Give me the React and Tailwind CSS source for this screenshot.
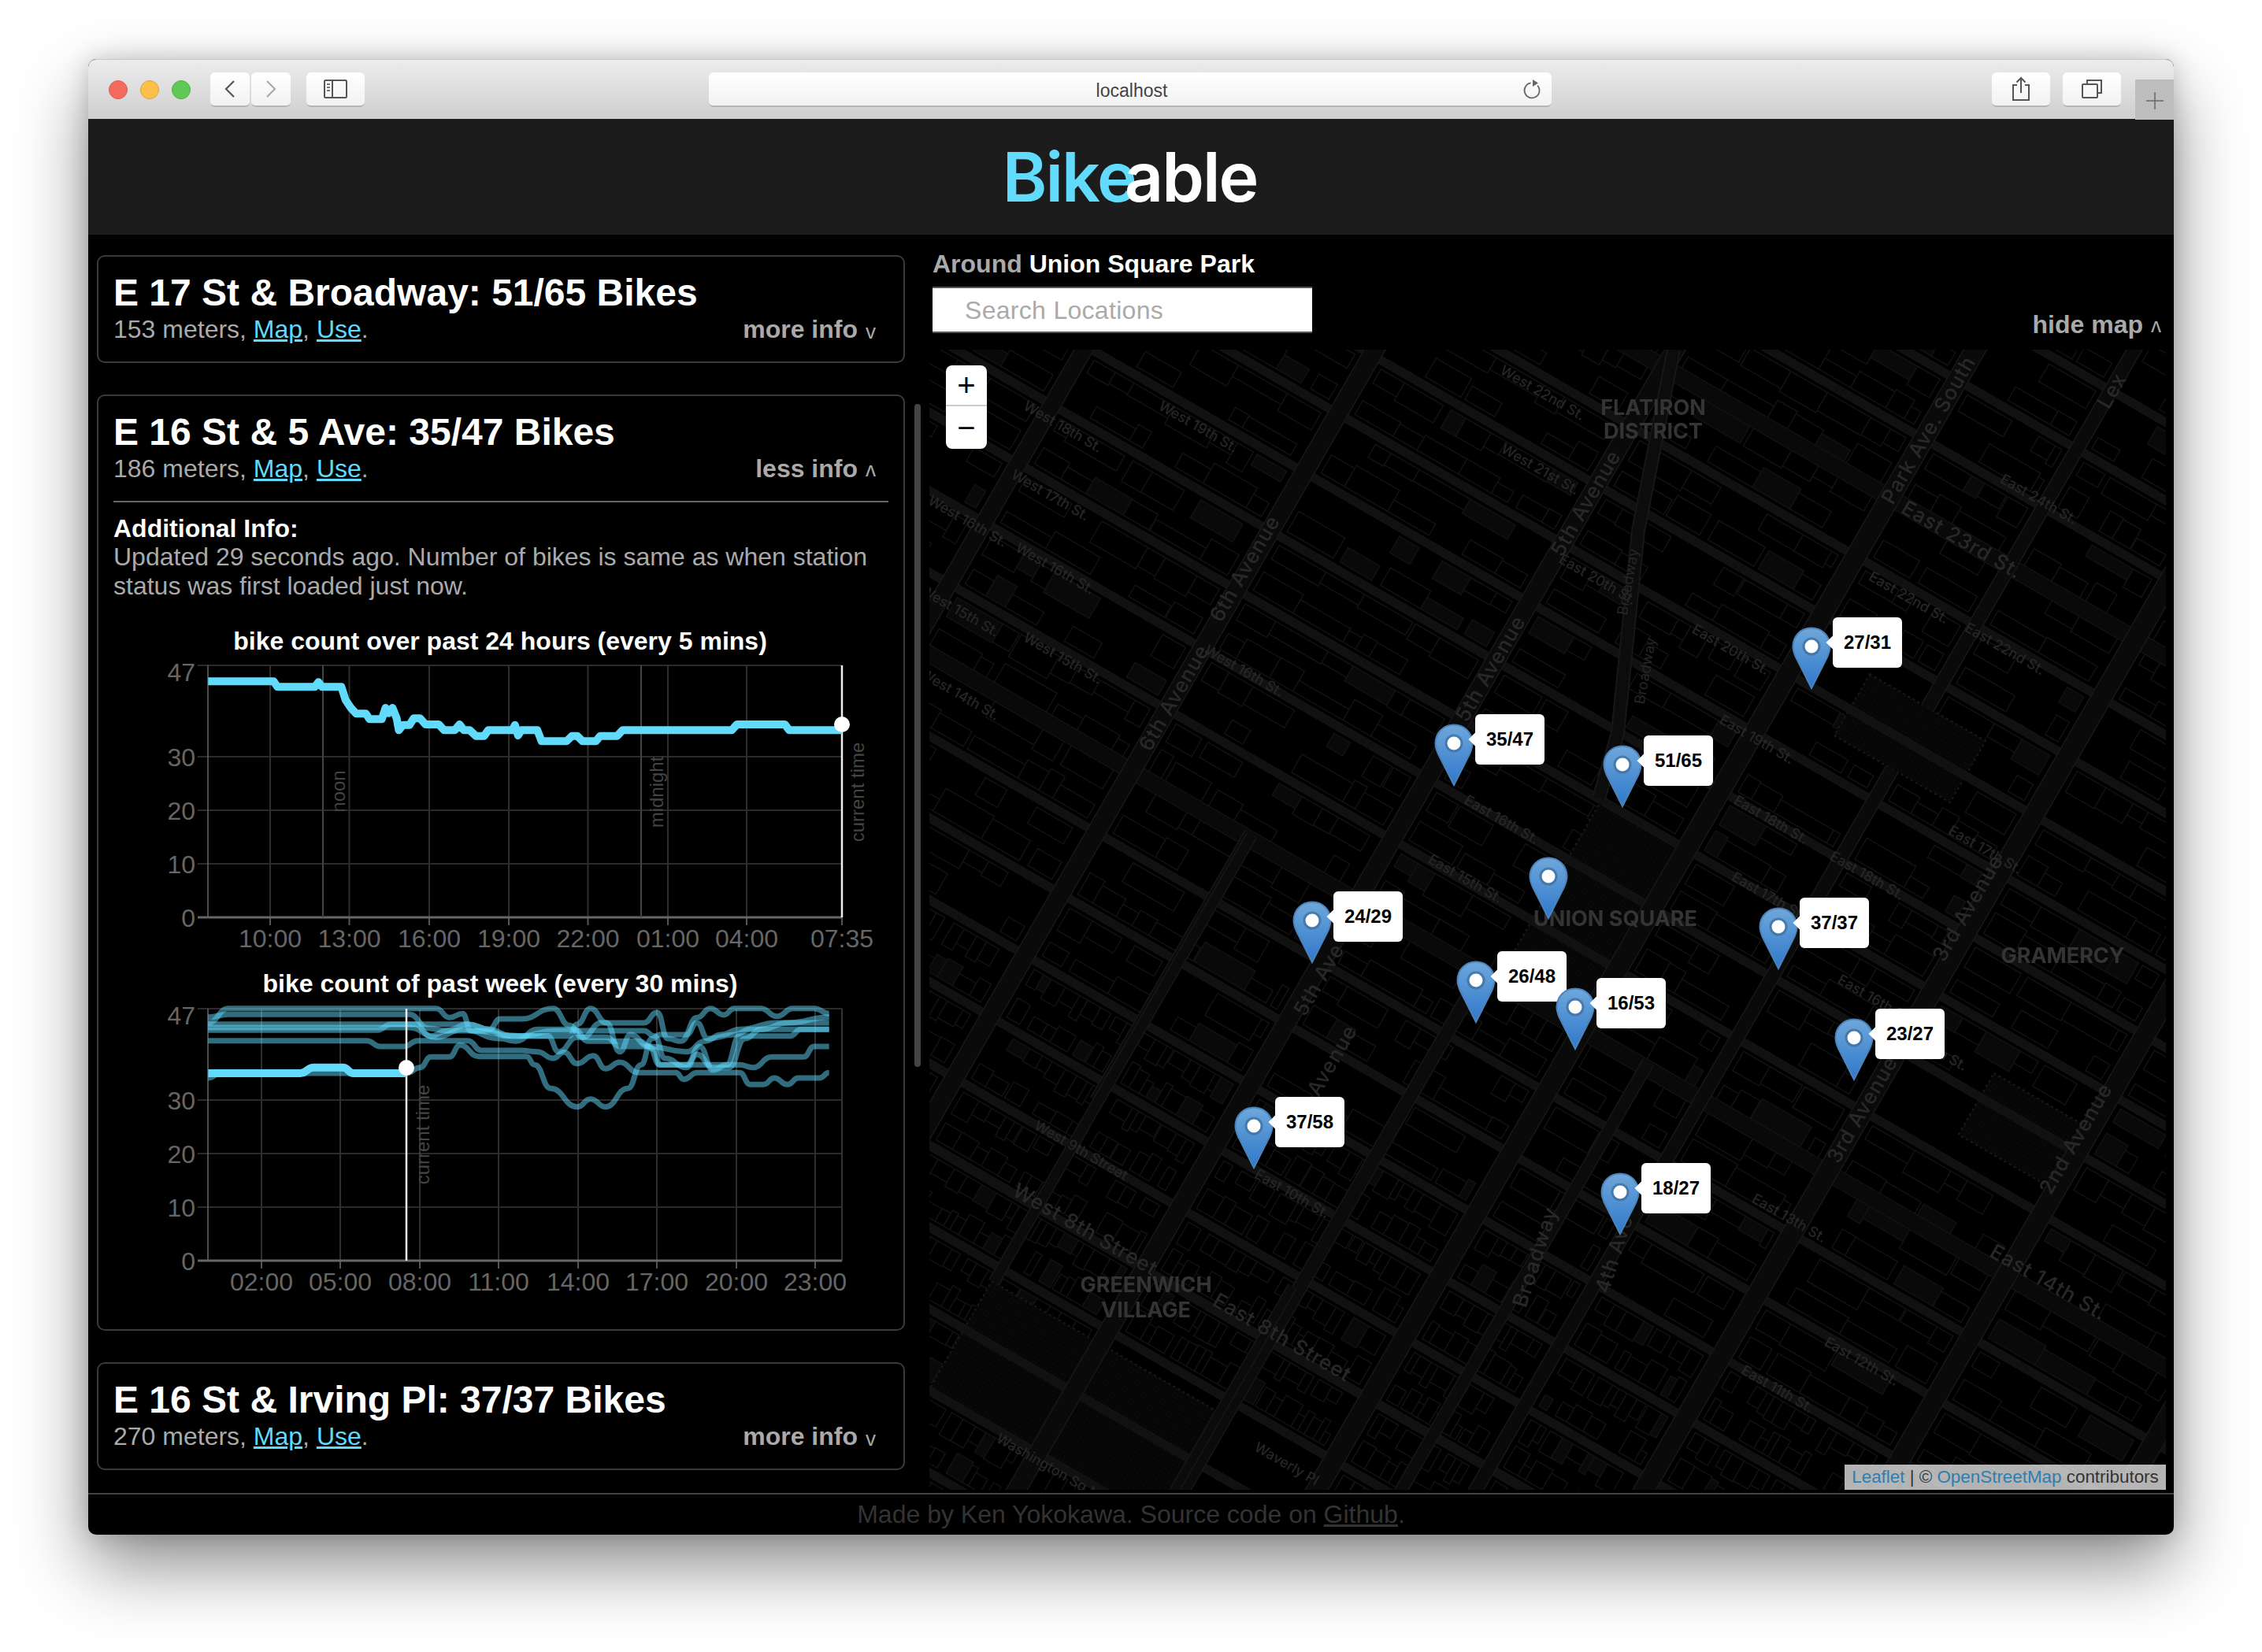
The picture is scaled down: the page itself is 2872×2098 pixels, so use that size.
import React from "react";

const CY = "#61dafb";
const SANS = '"Liberation Sans", Arial, sans-serif';

/* ---------- map drawing ---------- */
function rng(seed) {
  let s = seed;
  return () => {
    s = (s * 1664525 + 1013904223) >>> 0;
    return s / 4294967296;
  };
}
const streetV = [];
for (let n = 30; n >= 2; n--) {
  const v = n >= 16 ? 155 - 86 * (n - 16) : 155 + 90 * (16 - n);
  streetV.push({ n, v, w: n === 23 || n === 14 ? 20 : n === 8 ? 10 : 9 });
}
const aves = [
  { u: -140, w: 20 },
  { u: 170, w: 20 },
  { u: 490, w: 22 },
  { u: 820, w: 22 },
  { u: 1150, w: 24 },
  { u: 1325, w: 16 },
  { u: 1510, w: 24 },
  { u: 1772, w: 24 },
  { u: 2040, w: 24 },
];
const parks = [
  [660, 985, 334, 160],
  [1025, 72, 124, 240],
  [1240, -240, 170, 90],
  [1630, 120, 130, 90],
];
function inPark(u, v) {
  return parks.some(([a, b, c, d]) => u > a - 4 && u < a + c + 4 && v > b - 4 && v < b + d + 4);
}
function buildLots() {
  const r = rng(77);
  const lots = [];
  for (let i = 0; i < aves.length - 1; i++) {
    for (let j = 0; j < streetV.length - 1; j++) {
      const a = aves[i].u + aves[i].w / 2 + 8;
      const b = aves[i + 1].u - aves[i + 1].w / 2 - 8;
      const t = streetV[j].v + 10;
      const bt = streetV[j + 1].v - 10;
      if (inPark((a + b) / 2, (t + bt) / 2)) continue;
      const dense = streetV[j].n < 12;
      const depth = (bt - t) / 2 - 2;
      for (const top of [true, false]) {
        let x = a;
        while (x < b - 8) {
          const w = Math.min((dense ? 8 : 18) + r() * (dense ? 18 : 60), b - x);
          const d = depth * (0.5 + r() * 0.5);
          const y = top ? t : bt - d;
          const skip = r() > (dense ? 0.94 : 0.8);
          if (!skip && !inPark(x, y)) {
            lots.push({ x, y, w, h: d, f: r() > 0.9 ? "#090909" : "#000" });
          }
          x += w + (r() > 0.8 ? r() * 14 : 0);
        }
      }
    }
  }
  return lots;
}
const LOTS = buildLots();
const MAP_LABELS = [
  ["West 19th St.", 1521, 543], ["West 18th St.", 1349, 543], ["West 17th St.", 1333, 630],
  ["West 16th St.", 1339, 723], ["West 16th St.", 1228, 663], ["West 16th St.", 1579, 853],
  ["West 15th St.", 1349, 837], ["West 15th St.", 1218, 777], ["West 14th St.", 1218, 883],
  ["West 22nd St.", 1958, 500], ["West 21st St.", 1955, 597], ["East 20th St.", 2028, 737],
  ["East 20th St.", 2197, 826], ["East 19th St.", 2230, 940], ["East 18th St.", 2248, 1042],
  ["East 18th St.", 2370, 1113], ["East 17th St.", 2245, 1139], ["East 16th St.", 1906, 1042],
  ["East 15th St.", 1860, 1117], ["East 24th St.", 2588, 635], ["East 22nd St.", 2423, 760],
  ["East 22nd St.", 2545, 825], ["West 9th Street", 1372, 1462], ["East 10th St.", 1640, 1517],
  ["Washington Sq N", 1330, 1863], ["Waverly Pl", 1633, 1860], ["East 12th St.", 2363, 1730],
  ["East 11th St.", 2256, 1765], ["East 13th St.", 2271, 1548], ["East 15th St.", 2450, 1330],
  ["East 16th St.", 2380, 1270], ["East 17th St.", 2520, 1080],
];
const MAP_BIG = [
  ["East 23rd St.", 2490, 687, 30], ["West 8th Street", 1377, 1563, 30], ["East 8th Street", 1627, 1700, 30],
  ["East 14th St.", 2600, 1630, 30],
  ["6th Avenue", 1582, 723, -60], ["5th Avenue", 2015, 640, -60], ["5th Avenue", 1894, 850, -60],
  ["6th Avenue", 1492, 887, -60], ["5th Ave", 1676, 1245, -60], ["Park Ave. South", 2450, 547, -60],
  ["Lex", 2683, 497, -60], ["3rd Avenue", 2366, 1410, -60], ["3rd Avenue", 2500, 1154, -60],
  ["2nd Avenue", 2637, 1447, -60], ["Broadway", 1951, 1597, -72], ["4th Ave", 2051, 1593, -72],
  ["5th Avenue", 1680, 1370, -60],
];
const HOODS = [
  ["FLATIRON", 2099, 520], ["DISTRICT", 2099, 550], ["UNION SQUARE", 2051, 1169],
  ["GRAMERCY", 2619, 1216], ["GREENWICH", 1455, 1634], ["VILLAGE", 1455, 1666],
];
const MARKERS = [
  ["27/31", 2300, 796], ["51/65", 2060, 946], ["35/47", 1846, 919], [null, 1966, 1088],
  ["24/29", 1666, 1144], ["37/37", 2258, 1152], ["26/48", 1874, 1220], ["16/53", 2000, 1254],
  ["23/27", 2354, 1293], ["37/58", 1592, 1405], ["18/27", 2057, 1489],
];

function MapArt() {
  const extra = [
    [660, 327, 660, 720, 14], [1003, 327, 1003, 1300, 16], [1243, 327, 1243, 1300, 14],
    [663, 330, 663, 985, 12], [994, 800, 994, 1300, 10],
  ];
  return (
    <svg width="1570" height="1448" viewBox="0 0 1570 1448" className="block">
      <defs>
        <pattern id="parkdots" width="5" height="5" patternUnits="userSpaceOnUse">
          <rect width="5" height="5" fill="#060606" />
          <circle cx="2" cy="2" r="0.8" fill="#111" />
        </pattern>
      </defs>
      <rect width="1570" height="1448" fill="#000" />
      <g transform="rotate(30)">
        {LOTS.map((l, i) => (
          <rect key={i} x={l.x} y={l.y} width={l.w} height={l.h} fill={l.f} stroke="#121212" strokeWidth="1.5" />
        ))}
        {parks.map(([a, b, c, d], i) => (
          <rect key={i} x={a} y={b} width={c} height={d} fill="url(#parkdots)" stroke="#1a1a1a" strokeWidth="2" strokeDasharray="3 4" />
        ))}
        <circle cx="820" cy="1085" r="9" fill="#262626" />
        {streetV.map((s) => (
          <g key={s.n}>
            <line x1="-900" x2="3100" y1={s.v} y2={s.v} stroke="#161616" strokeWidth={s.w + 2} />
            <line x1="-900" x2="3100" y1={s.v} y2={s.v} stroke={s.w > 12 ? "#090909" : "#111111"} strokeWidth={s.w} />
          </g>
        ))}
        {extra.map(([x1, y1, x2, y2, w], i) => (
          <g key={i}>
            <line x1={x1} x2={x2} y1={y1} y2={y2} stroke="#171717" strokeWidth={w + 3} />
            <line x1={x1} x2={x2} y1={y1} y2={y2} stroke="#0b0b0b" strokeWidth={w} />
          </g>
        ))}
        {aves.map((a) => (
          <g key={a.u}>
            <line x1={a.u} x2={a.u} y1="-900" y2={a.u === 1325 ? -240 : 2400} stroke="#181818" strokeWidth={a.w + 3} />
            <line x1={a.u} x2={a.u} y1="-900" y2={a.u === 1325 ? -240 : 2400} stroke="#0a0a0a" strokeWidth={a.w} />
          </g>
        ))}
        <line x1="1325" x2="1325" y1="-150" y2="2400" stroke="#181818" strokeWidth="19" />
        <line x1="1325" x2="1325" y1="-150" y2="2400" stroke="#0a0a0a" strokeWidth="16" />
      </g>
      <polyline points="945,0 900,230 874,487 850,570" fill="none" stroke="#171717" strokeWidth="18" />
      <polyline points="945,0 900,230 874,487 850,570" fill="none" stroke="#0c0c0c" strokeWidth="14" />
      <g fill="#262626" fontFamily="Inter, sans-serif" fontSize="18" fontWeight="500" textAnchor="middle">
        {MAP_LABELS.map(([t, x, y], i) => (
          <text key={i} transform={`translate(${x - 1180} ${y - 444}) rotate(30)`} dominantBaseline="middle">{t}</text>
        ))}
      </g>
      <g fill="#282828" fontFamily="Inter, sans-serif" fontSize="26" fontWeight="500" textAnchor="middle" letterSpacing="1">
        {MAP_BIG.map(([t, x, y, a], i) => (
          <text key={i} transform={`translate(${x - 1180} ${y - 444}) rotate(${a})`} dominantBaseline="middle">{t}</text>
        ))}
      </g>
      <g fill="#343434" fontFamily="Inter, sans-serif" fontSize="27" fontWeight="700" textAnchor="middle" className="blur-[0.7px]">
        {HOODS.map(([t, x, y], i) => (
          <text key={i} x={x - 1180} y={y - 444} dominantBaseline="middle">{t}</text>
        ))}
      </g>
      <g fill="#262626" fontFamily="Inter, sans-serif" fontSize="18" textAnchor="middle">
        <text x="915" y="409" transform="rotate(-80 915 409)">Broadway</text>
        <text x="893" y="296" transform="rotate(-80 893 296)">Broadway</text>
      </g>
    </svg>
  );
}

function Pin({ id }) {
  return (
    <svg width="50" height="80" viewBox="0 0 50 80" className="block">
      <defs>
        <linearGradient id={id} x1="0" y1="0" x2="0" y2="1">
          <stop offset="0" stopColor="#6ea7da" />
          <stop offset="1" stopColor="#2f78cb" />
        </linearGradient>
      </defs>
      <path d="M25 1.5C11.5 1.5 1.5 11.5 1.5 25c0 5 1.5 9 3.5 13.5L25 78l20-39.500c2-4.500 3.500-8.500 3.500-13.500C48.500 11.500 38.500 1.500 25 1.500Z" fill={`url(#${id})`} stroke="#4d83bc" strokeWidth="2" />
      <circle cx="25" cy="25" r="11.500" fill="#3d6f9f" fillOpacity="0.75" />
      <circle cx="25" cy="25" r="8.500" fill="#fff" />
    </svg>
  );
}

function Marker({ label, x, y, id }) {
  return (
    <>
      <div className="absolute" style={{ left: x - 25 - 1180, top: y - 444 }}>
        <Pin id={id} />
      </div>
      {label && (
        <div
          className="absolute flex h-[64px] w-[88px] items-center justify-center rounded-[6px] bg-white text-[24px] font-bold text-black"
          style={{ left: x + 27 - 1180, top: y - 12 - 444 }}
        >
          <span className="absolute left-[-6px] top-[26px] h-[12px] w-[12px] rotate-45 bg-white" />
          <span className="relative">{label}</span>
        </div>
      )}
    </>
  );
}

/* ---------- charts ---------- */
const C1 = [[212,259],[335,259],[342,280],[412,280],[419,262],[426,280],[462,280],[470,330],[480,360],[490,382],[508,382],[515,403],[538,403],[545,360],[551,380],[558,360],[566,400],[570,445],[578,425],[590,425],[598,400],[610,400],[620,423],[645,423],[655,445],[675,445],[684,423],[692,445],[703,445],[715,467],[730,467],[738,445],[783,445],[788,425],[794,465],[800,445],[830,445],[838,487],[885,487],[895,467],[905,467],[915,487],[940,487],[948,467],[980,467],[990,445],[1195,445],[1205,423],[1295,423],[1303,445],[1402,445]];
const WEEK = [
  [[212,450],[235,432],[385,432],[410,432],[465,432],[485,432],[584,432],[610,410],[630,370],[665,370],[685,325],[720,368],[810,368],[825,400],[855,490],[905,560],[930,530],[958,560],[1000,490],[1025,400],[1045,300],[1060,285],[1110,285],[1130,240],[1150,300],[1200,285],[1230,265],[1378,265]],
  [[212,308],[510,308],[535,330],[580,330],[605,308],[700,308],[725,345],[800,345],[830,350],[860,375],[880,352],[905,395],[935,365],[958,415],[985,390],[1020,430],[1090,430],[1105,455],[1130,430],[1210,430],[1230,475],[1255,475],[1275,450],[1300,475],[1320,450],[1360,450],[1378,430]],
  [[212,268],[530,268],[555,245],[600,245],[630,290],[660,270],[740,270],[770,290],[890,290],[905,245],[930,185],[960,240],[985,350],[1005,285],[1040,330],[1060,400],[1110,400],[1135,330],[1160,420],[1185,400],[1210,290],[1305,290],[1325,265],[1378,265]],
  [[212,245],[700,245],[740,265],[760,225],[800,225],[860,185],[890,250],[915,295],[950,240],[1030,240],[1055,200],[1075,300],[1100,310],[1130,220],[1155,185],[1180,210],[1200,185],[1250,185],[1280,215],[1310,185],[1350,185],[1378,205]],
  [[212,218],[250,208],[590,208],[625,260],[660,270],[700,245],[740,265],[780,290],[850,290],[870,350],[905,295],[960,295],[985,330],[1040,330],[1110,350],[1145,310],[1175,285],[1210,265],[1280,240],[1378,240]],
  [[212,258],[590,258],[640,295],[690,265],[760,300],[790,310],[830,265],[900,265],[925,310],[1020,310],[1050,340],[1060,400],[1210,400],[1235,410],[1270,370],[1330,370],[1350,330],[1378,330]],
  [[212,240],[250,185],[550,185],[575,185],[640,185],[665,220],[690,205],[705,270],[800,290],[860,270],[960,270],[1030,270],[1050,290],[1070,375],[1110,410],[1130,360],[1160,410],[1190,410],[1220,300],[1250,265],[1300,240],[1378,218]],
];
const real = (arr, y0) => arr.map(([x, y]) => [x / 1.479 + 120, y / 3 + y0]);
const pts = (arr, y0) => real(arr, y0).map(([x, y]) => `${x.toFixed(1)},${y.toFixed(1)}`).join(" ");
function smooth(arr, y0) {
  const p = real(arr, y0);
  let d = `M${p[0][0].toFixed(1)} ${p[0][1].toFixed(1)}`;
  for (let i = 0; i < p.length - 1; i++) {
    const [x1, y1] = p[i];
    const [x2, y2] = p[i + 1];
    const mx = (x1 + x2) / 2;
    d += `C${mx.toFixed(1)} ${y1.toFixed(1)} ${mx.toFixed(1)} ${y2.toFixed(1)} ${x2.toFixed(1)} ${y2.toFixed(1)}`;
  }
  return d;
}

function Chart({ top, xticks, children, notes }) {
  const bottom = top + 320;
  const yFor = (v) => bottom - v * 6.8;
  return (
    <svg width="1023" height="380" viewBox={`124 ${top - 12} 1023 380`} className="block" fontFamily={SANS}>
      {[47, 30, 20, 10].map((v) => (
        <line key={v} x1="250" x2="1068" y1={v === 47 ? top : yFor(v)} y2={v === 47 ? top : yFor(v)} stroke="#2b2b2b" strokeWidth="2" />
      ))}
      {xticks.map(([t, x]) => (
        <g key={t}>
          <line x1={x} x2={x} y1={top} y2={bottom} stroke={t === "07:35" ? "none" : "#2f2f2f"} strokeWidth="2" />
          <line x1={x} x2={x} y1={bottom} y2={bottom + 10} stroke="#555" strokeWidth="2" />
          <text x={x} y={bottom + 38} textAnchor="middle" fontSize="32" fill="#666">{t}</text>
        </g>
      ))}
      <line x1="263" x2="263" y1={top} y2={bottom} stroke="#666" strokeWidth="1.500" />
      <line x1="1068" x2="1068" y1={top} y2={bottom} stroke="#333" strokeWidth="2" />
      <line x1="250" x2="1068" y1={bottom} y2={bottom} stroke="#666" strokeWidth="3" />
      {[[47, top + 20], [30, yFor(30) + 12], [20, yFor(20) + 12], [10, yFor(10) + 12], [0, bottom + 12]].map(([v, y]) => (
        <text key={v} x="247" y={y} textAnchor="end" fontSize="32" fill="#666">{v}</text>
      ))}
      {notes.map(([t, x, y]) => (
        <text key={t} transform={`translate(${x} ${y}) rotate(-90)`} textAnchor="middle" fontSize="24" fill="#444" dominantBaseline="middle">{t}</text>
      ))}
      {children}
    </svg>
  );
}

function Chevron({ up }) {
  return <span className={`ml-[10px] inline-block text-[26px] font-normal leading-none ${up ? "translate-y-[5px] rotate-180" : "translate-y-[3px]"}`}>v</span>;
}

function CardHead({ title, meters, more }) {
  return (
    <>
      <h2 className="text-[48px] font-bold leading-[48px] text-white">{title}</h2>
      <div className="mt-[4px] flex items-center justify-between pr-[16px] text-[32px] leading-[36px] text-[#aaa]">
        <span>
          {meters} meters, <a className="text-[#61dafb] underline">Map</a>, <a className="text-[#61dafb] underline">Use</a>.
        </span>
        <span className="flex items-center font-bold">
          {more ? "more info" : "less info"}
          <Chevron up={!more} />
        </span>
      </div>
    </>
  );
}

function Card({ children, last }) {
  return (
    <section className={`rounded-[10px] border-2 border-[#3a3a3a] px-[19px] pb-[23px] pt-[22px] ${last ? "" : "mb-[40px]"}`}>
      {children}
    </section>
  );
}

function TitleBar() {
  const btn = "flex h-[44px] items-center justify-center rounded-[6px] border-b-2 border-[#b5b5b5] bg-gradient-to-b from-[#ffffff] to-[#f2f2f2]";
  return (
    <div className="relative flex h-[76px] items-start rounded-t-[10px] border-t border-[#c8c8c8] bg-gradient-to-b from-[#ececec] to-[#cfcfcf] pt-[16px]">
      <div className="ml-[26px] flex h-[44px] items-center gap-[16px]">
        <span className="h-[24px] w-[24px] rounded-full border border-[#e2564b] bg-[#f46a5e]" />
        <span className="h-[24px] w-[24px] rounded-full border border-[#dfa33a] bg-[#fbbf4a]" />
        <span className="h-[24px] w-[24px] rounded-full border border-[#4fae42] bg-[#60c855]" />
      </div>
      <div className={`${btn} ml-[25px] w-[50px]`}>
        <svg width="16" height="24" viewBox="0 0 16 24"><path d="M13 2 3 12l10 10" fill="none" stroke="#555" strokeWidth="2.200" /></svg>
      </div>
      <div className={`${btn} ml-[2px] w-[50px]`}>
        <svg width="16" height="24" viewBox="0 0 16 24"><path d="M3 2l10 10L3 22" fill="none" stroke="#aaa" strokeWidth="2.200" /></svg>
      </div>
      <div className={`${btn} ml-[20px] w-[74px]`}>
        <svg width="30" height="24" viewBox="0 0 30 24">
          <rect x="1" y="1" width="28" height="22" rx="1.500" fill="none" stroke="#555" strokeWidth="2" />
          <path d="M11 1v22" stroke="#555" strokeWidth="2" />
          <path d="M4 6h4M4 10h4M4 14h4" stroke="#777" strokeWidth="2" />
        </svg>
      </div>
      <div className={`${btn} relative ml-[437px] w-[1070px] pl-[4px] pt-[5px] text-[23px] text-[#444]`}>
        localhost
        <svg className="absolute right-[12px] top-[8px]" width="26" height="28" viewBox="0 0 26 28">
          <path d="M17.500 6.500a9.500 9.500 0 1 1-9 0" fill="none" stroke="#666" strokeWidth="1.800" transform="rotate(20 13 15)" />
          <path d="M14 1l7 4.500-7 4.500Z" fill="#666" />
        </svg>
      </div>
      <div className={`${btn} ml-[559px] w-[74px]`}>
        <svg width="26" height="32" viewBox="0 0 26 32">
          <path d="M8 11H3v19h20V11h-5" fill="none" stroke="#555" strokeWidth="2" />
          <path d="M13 21V2M7.500 7.500 13 2l5.500 5.500" fill="none" stroke="#555" strokeWidth="2" />
        </svg>
      </div>
      <div className={`${btn} ml-[16px] w-[74px]`}>
        <svg width="28" height="26" viewBox="0 0 28 26">
          <path d="M8 6V2h18v16h-5" fill="none" stroke="#555" strokeWidth="2" />
          <rect x="2" y="7" width="19" height="17" rx="1" fill="none" stroke="#555" strokeWidth="2" />
        </svg>
      </div>
      <div className="absolute right-0 top-[25px] flex h-[51px] w-[49px] items-center justify-center bg-[#bdbdbd] pt-[2px]">
        <svg width="22" height="22" viewBox="0 0 22 22"><path d="M11 0v22M0 11h22" stroke="#666" strokeWidth="1.500" /></svg>
      </div>
    </div>
  );
}

export default function App() {
  return (
    <div className="h-[2098px] w-[2872px] overflow-hidden bg-white pl-[112px] pt-[75px]" style={{ fontFamily: SANS }}>
      <div className="flex h-[1874px] w-[2648px] flex-col rounded-[10px] bg-black shadow-[0_40px_90px_rgba(0,0,0,0.45),0_0_30px_rgba(0,0,0,0.18)]">
        <TitleBar />
        <header className="flex h-[147px] items-center justify-center bg-[#1c1c1c] pr-[3px]" style={{ fontFamily: "Inter, sans-serif" }}>
          <span className="text-[86px] font-semibold leading-none tracking-[-2px] text-[#61dafb]">Bike</span>
          <span className="ml-[-14px] text-[86px] font-semibold leading-none tracking-[-2px] text-white">able</span>
        </header>
        <main className="flex h-[1598px]">
          <div className="relative h-full w-[1068px] overflow-hidden pl-[11px] pr-[31px] pt-[26px]">
            <Card>
              <CardHead title="E 17 St & Broadway: 51/65 Bikes" meters="153" more />
            </Card>
            <Card>
              <CardHead title="E 16 St & 5 Ave: 35/47 Bikes" meters="186" />
              <hr className="mt-[23px] border-t-2 border-[#666]" />
              <div className="mt-[15px] text-[32px] font-bold leading-[36px] text-white">Additional Info:</div>
              <p className="text-[32px] leading-[37px] text-[#aaa]">
                Updated 29 seconds ago. Number of bikes is same as when station status was first loaded just now.
              </p>
              <div className="mx-[-19px] mb-[16px] mt-[33px]">
                <div className="pr-[2px] text-center text-[32px] font-bold leading-[36px] text-white">bike count over past 24 hours (every 5 mins)</div>
                <div className="mt-[1px]">
                  <Chart
                    top={846}
                    xticks={[["10:00", 342], ["13:00", 442.5], ["16:00", 544], ["19:00", 645], ["22:00", 745.5], ["01:00", 847], ["04:00", 947], ["07:35", 1068]]}
                    notes={[["noon", 431, 1006], ["midnight", 835, 1007], ["current time", 1090, 1007]]}
                  >
                    <line x1="409" x2="409" y1="846" y2="1166" stroke="#444" strokeWidth="2" />
                    <line x1="813" x2="813" y1="846" y2="1166" stroke="#444" strokeWidth="2" />
                    <line x1="1068" x2="1068" y1="846" y2="1166" stroke="#eee" strokeWidth="2.500" />
                    <polyline points={pts(C1, 780)} fill="none" stroke={CY} strokeWidth="10" strokeLinejoin="round" />
                    <circle cx="1068" cy="921" r="10" fill="#fff" />
                  </Chart>
                </div>
                <div className="mt-[18px] pr-[2px] text-center text-[32px] font-bold leading-[36px] text-white">bike count of past week (every 30 mins)</div>
                <div className="mt-[2px]">
                  <Chart
                    top={1282}
                    xticks={[["02:00", 331], ["05:00", 431], ["08:00", 532], ["11:00", 632], ["14:00", 733], ["17:00", 833], ["20:00", 934], ["23:00", 1034]]}
                    notes={[["current time", 538, 1442]]}
                  >
                    {WEEK.map((s, i) => (
                      <path key={i} d={smooth(s, 1220)} fill="none" stroke={CY} strokeOpacity="0.5" strokeWidth="7" strokeLinejoin="round" />
                    ))}
                    <line x1="515" x2="515" y1="1282" y2="1602" stroke="#eee" strokeWidth="2.500" />
                    <path d={smooth([[212,432],[385,432],[410,410],[465,410],[485,432],[584,432]], 1220)} fill="none" stroke={CY} strokeWidth="10" />
                    <circle cx="515" cy="1357" r="10" fill="#fff" />
                  </Chart>
                </div>
              </div>
            </Card>
            <Card last>
              <CardHead title="E 16 St & Irving Pl: 37/37 Bikes" meters="270" more />
            </Card>
            <span className="absolute left-[1049px] top-[215px] h-[842px] w-[8px] rounded-full bg-[#444]" />
          </div>
          <div className="flex h-full w-[1580px] flex-col">
            <div className="flex h-[146px] items-end justify-between pl-[4px] pr-[16px]">
              <div className="pb-[21px]">
                <div className="text-[32px] font-bold leading-[36px] text-[#aaa]">
                  Around <span className="text-white">Union Square Park</span>
                </div>
                <input
                  readOnly
                  placeholder="Search Locations"
                  className="mt-[11px] block h-[59px] w-[482px] border-y-2 border-[#555] bg-white pl-[41px] pt-[2px] text-[32px] tracking-[0.3px] text-black outline-none placeholder:text-[#aaa]"
                />
              </div>
              <div className="mb-[14px] flex items-center text-[32px] font-bold leading-[36px] text-[#aaa]">
                hide map
                <Chevron up />
              </div>
            </div>
            <div className="relative h-[1448px] w-[1570px] overflow-hidden">
              <MapArt />
              <div className="absolute left-[21px] top-[20px] w-[52px] overflow-hidden rounded-[8px] bg-white text-black">
                <div className="flex h-[52px] items-center justify-center border-b-2 border-[#ccc] text-[40px] leading-none">+</div>
                <div className="flex h-[54px] items-center justify-center text-[40px] leading-none">−</div>
              </div>
              {MARKERS.map(([l, x, y], i) => (
                <Marker key={i} label={l} x={x} y={y} id={`pin${i}`} />
              ))}
              <div className="absolute bottom-0 right-0 flex h-[32px] w-[408px] items-center justify-center whitespace-nowrap bg-white/70 text-[22.4px] text-[#333]">
                <a className="text-[#2e7fae]">Leaflet</a>&nbsp;|&nbsp;©&nbsp;<a className="text-[#2e7fae]">OpenStreetMap</a>&nbsp;contributors
              </div>
            </div>
          </div>
        </main>
        <footer className="flex h-[53px] items-center justify-center border-t-2 border-[#444] pb-[2px] text-[32px] leading-none text-[#333]">
          <span>Made by Ken Yokokawa. Source code on <a className="underline">Github</a>.</span>
        </footer>
      </div>
    </div>
  );
}
